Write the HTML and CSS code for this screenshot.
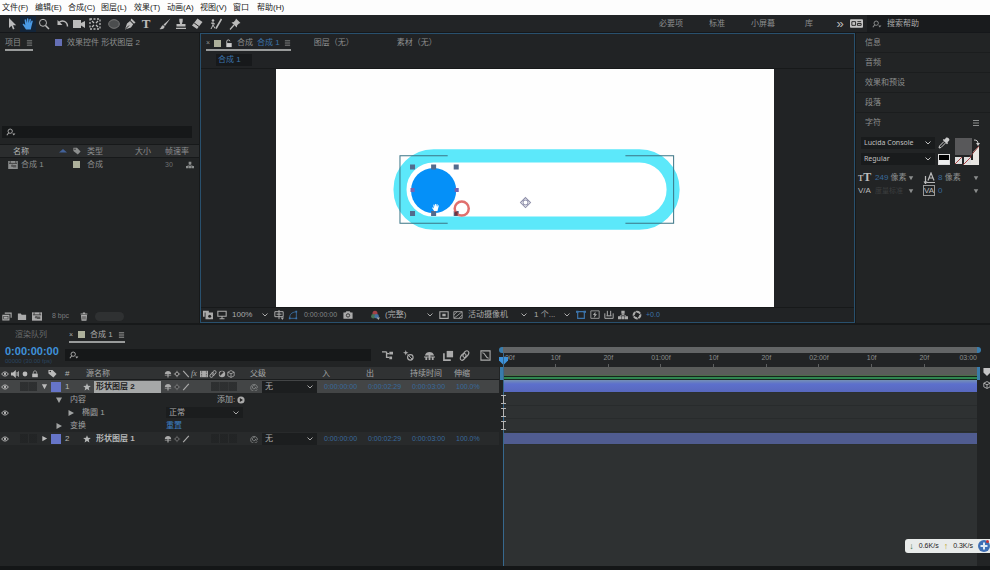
FILE: index.html
```html
<!DOCTYPE html>
<html lang="zh-CN">
<head>
  <meta charset="UTF-8">
  <meta name="viewport" content="width=device-width, initial-scale=1.0">
  <title>合成 1</title>
  <link rel="stylesheet" href="styles.css">
</head>
<body>
  <svg class="sprite" aria-hidden="true">
    <symbol id="arrow" viewBox="0 0 12 12"><path d="M3 0v10l2.500-2.200L7 11.500l1.500-.7-1.500-3.500h3.200z" fill="currentColor"/></symbol>
    <symbol id="hand" viewBox="0 0 12 12"><path d="M4 11.500 .8 6.800c-.5-1 .7-1.500 1.300-.7l1.200 1.200L2.600 2c0-1 1.200-1 1.400 0l.7 3L4.900.9c.1-1 1.400-1 1.500 0l.2 4L7.500 1.300c.3-.9 1.500-.6 1.400.3l-.5 3.700 1-2.300c.5-.8 1.600-.3 1.300.5L9.300 9l-.5 2.500z" fill="currentColor"/></symbol>
    <symbol id="search" viewBox="0 0 12 12"><circle cx="5" cy="4.800" r="3.500" fill="none" stroke="currentColor"/><path d="M7.500 7.500 11 11" stroke="currentColor" stroke-width="1.500"/></symbol>
    <symbol id="find" viewBox="0 0 12 10"><circle cx="5" cy="4" r="2.700" fill="none" stroke="currentColor" stroke-width="1.200"/><path d="M3.200 6 .8 9" stroke="currentColor" stroke-width="1.300"/><path d="M7.500 7h4L9.500 9.300z" fill="currentColor"/></symbol>
    <symbol id="rotate" viewBox="0 0 12 12"><path d="M2 4.500C5 1.500 10.500 3 10.500 8.500" fill="none" stroke="currentColor" stroke-width="1.400"/><path d="M.5 2v5h5z" fill="currentColor"/></symbol>
    <symbol id="camera" viewBox="0 0 12 12"><path d="M0 2h8V5L12 3v7L8 7.500V10H0z" fill="currentColor"/></symbol>
    <symbol id="anchor" viewBox="0 0 12 12"><rect x="1" y="1" width="10" height="10" fill="none" stroke="currentColor" stroke-width="1.300" stroke-dasharray="2 1.500"/><path d="m3 3 2 2M9 3 7 5M3 9l2-2M9 9 7 7" stroke="currentColor" stroke-width="1.300"/></symbol>
    <symbol id="ellipse" viewBox="0 0 12 12"><ellipse cx="6" cy="6" rx="5.300" ry="4.300" fill="#4b4d4e" stroke="currentColor"/></symbol>
    <symbol id="pen" viewBox="0 0 12 12"><path d="m7.500.5 4 4-1.500 1.200-3.500-3.500zM6 3 9.200 6.200 7 9.500 1 11.500 3 5.500z" fill="currentColor"/><path d="m1.500 11 3.500-3.500" stroke="#222"/></symbol>
    <symbol id="brush" viewBox="0 0 12 12"><path d="M11.500.5 6 8 4.500 6.500zM4 7l1.700 1.700C4.800 11 2.500 11.500.5 11c1.500-.6 1.500-3 3.500-4z" fill="currentColor"/></symbol>
    <symbol id="stamp" viewBox="0 0 12 12"><path d="M4.300.8h3.400v2.400L6.900 6H10.500v2.500h-9V6h3.600L4.300 3.200zM1 9.800h10V11H1z" fill="currentColor"/></symbol>
    <symbol id="eraser" viewBox="0 0 12 12"><path d="M6.500.5 11.500 4 6 11 1 7.500z" fill="currentColor"/><path d="M3.200 5 8 8.500" stroke="#222"/></symbol>
    <symbol id="roto" viewBox="0 0 12 12"><circle cx="3" cy="2.500" r="1.300" fill="currentColor"/><path d="M3 4v3L1 11M3 7l2 3.500M1 5l4 1" stroke="currentColor" fill="none"/><path d="M11.500 1 8 7 6 10.500" stroke="currentColor" stroke-width="1.600"/></symbol>
    <symbol id="pin" viewBox="0 0 12 12"><path d="m7 .5 4.500 4.500-1.500.5-1.800 1.800-.4 2.300L2.500 4.500l2.300-.6L6.500 2z" fill="currentColor"/><path d="m5 7-4 4.500" stroke="currentColor" stroke-width="1.200"/></symbol>
    <symbol id="menu" viewBox="0 0 8 8"><path d="M1 1.500h6M1 4h6M1 6.500h6" stroke="currentColor"/></symbol>
    <symbol id="chevron" viewBox="0 0 8 8"><path d="m1.500 2.500 2.500 2.500 2.500-2.500" fill="none" stroke="currentColor"/></symbol>
    <symbol id="down" viewBox="0 0 8 8"><path d="M1 1.500h6L4 7z" fill="currentColor"/></symbol>
    <symbol id="right" viewBox="0 0 8 8"><path d="M1.500 1v6L7 4z" fill="currentColor"/></symbol>
    <symbol id="sort" viewBox="0 0 8 8"><path d="M0 5.500h8L4 2z" fill="currentColor"/></symbol>
    <symbol id="unlock" viewBox="0 0 8 10"><path d="M1 4.500h6V9H1z" fill="currentColor"/><path d="M1.500 4.500V2.500C1.500.5 5 .5 5 2.500" fill="none" stroke="currentColor"/></symbol>
    <symbol id="lock" viewBox="0 0 8 10"><path d="M.5 4.500h7V9h-7z" fill="currentColor"/><path d="M2 4.500V3c0-2.500 4-2.500 4 0v1.500" fill="none" stroke="currentColor"/></symbol>
    <symbol id="tag" viewBox="0 0 10 10"><path d="M.5 1h4.500l4.500 4.500-3.500 4L.5 5z" fill="currentColor"/><circle cx="2.500" cy="2.800" r=".8" fill="#222"/></symbol>
    <symbol id="comp" viewBox="0 0 12 10"><rect width="12" height="10" fill="currentColor"/><path d="M1 3h10M2.500 0v3M9.500 0v3" stroke="#333"/><circle cx="5" cy="6" r="1.500" fill="#555"/><path d="M6 5h4v3H6z" fill="#555"/></symbol>
    <symbol id="flow" viewBox="0 0 12 12"><path d="M4 1h4v3.500H4zM0 7.500h3.700V11H0zM4.200 7.500h3.600V11H4.200zM8.300 7.500H12V11H8.300z" fill="currentColor"/><path d="M6 4v4M2 7.500 6 5l4 2.500" stroke="currentColor" fill="none"/></symbol>
    <symbol id="footage" viewBox="0 0 12 12"><path d="M.5 4.500h8v6h-8zM3 1.500h8.500v6" fill="none" stroke="currentColor" stroke-width="1.500"/><path d="M2 6h5v3H2z" fill="currentColor"/></symbol>
    <symbol id="folder" viewBox="0 0 12 12"><path d="M.5 2h4l1 1.500h6v7H.5z" fill="currentColor"/></symbol>
    <symbol id="trash" viewBox="0 0 12 12"><path d="M2 4h8l-.7 7.500H2.700zM1.500 2h9v1.300h-9zM4.500.7h3V2h-3z" fill="currentColor"/><path d="M4.700 5.500V10M7.300 5.500V10" stroke="#222"/></symbol>
    <symbol id="layers" viewBox="0 0 12 12"><path d="M0 1h7v2H2v5H0zM3 3h9v8H3z" fill="currentColor"/><circle cx="8" cy="7.500" r="1.800" fill="#222"/></symbol>
    <symbol id="monitor" viewBox="0 0 12 12"><path d="M1 1.500h10v6H1zM3 10.500h6M6 7.500v3" fill="none" stroke="currentColor" stroke-width="1.300"/></symbol>
    <symbol id="grid" viewBox="0 0 12 12"><path d="M1 2h10v6H1zM6 0v11M3 5h6" fill="none" stroke="currentColor" stroke-width="1.200"/><path d="M8 9h4l-2 3z" fill="currentColor"/></symbol>
    <symbol id="mask" viewBox="0 0 12 12"><path d="M2 10C2 5 4 3 10 2v8z" fill="none" stroke="currentColor"/><path d="M1 9h2v2H1zM9 1h2v2H9zM9 9h2v2H9z" fill="currentColor"/></symbol>
    <symbol id="photo" viewBox="0 0 12 12"><path d="M.5 3H3l1-1.500h4L9 3h2.500v7.500H.5z" fill="currentColor"/><circle cx="6" cy="6.500" r="2" fill="none" stroke="#222"/></symbol>
    <symbol id="rgb" viewBox="0 0 12 12"><circle cx="6" cy="4" r="3" fill="#a34248"/><circle cx="4" cy="7.500" r="2.700" fill="#487358"/><circle cx="8" cy="7.500" r="2.700" fill="#4670a0"/><path d="M8 9h4l-2 3z" fill="#aaa"/></symbol>
    <symbol id="region" viewBox="0 0 12 12"><path d="M1 2h10v8H1z" fill="none" stroke="currentColor" stroke-width="1.300"/><path d="M4 4.500h4v3H4z" fill="currentColor"/></symbol>
    <symbol id="checker" viewBox="0 0 12 12"><path d="M1 2h10v8H1zM1 10l10-8M1 6l4-4M7 10l4-4" fill="none" stroke="currentColor"/></symbol>
    <symbol id="pixel" viewBox="0 0 12 12"><path d="M0 2h12M2 2v8h8V2" fill="none" stroke="currentColor" stroke-width="1.400"/><path d="M0 .8h3v2.400H0zM9 .8h3v2.400H9z" fill="currentColor"/></symbol>
    <symbol id="fast" viewBox="0 0 12 12"><path d="M1 1h10v9H1z" fill="none" stroke="currentColor"/><path d="M6.500 2 3.500 6h2L4.500 9.500l4-4.500h-2z" fill="currentColor"/></symbol>
    <symbol id="line" viewBox="0 0 12 12"><path d="M1 4v6h10V4M4 1v6M8 1v6M3 7h6" fill="none" stroke="currentColor" stroke-width="1.200"/></symbol>
    <symbol id="aperture" viewBox="0 0 12 12"><circle cx="6" cy="6" r="4" fill="none" stroke="currentColor" stroke-width="2.500"/><path d="m3 1 3 3M11 4 8 6M8 11 6 8M1 8l3-2" stroke="#222"/></symbol>
    <symbol id="eye" viewBox="0 0 12 10"><path d="M1 5c2.500-4 7.500-4 10 0-2.500 4-7.500 4-10 0z" fill="none" stroke="currentColor" stroke-width="1.400"/><circle cx="6" cy="5" r="1.700" fill="currentColor"/></symbol>
    <symbol id="audio" viewBox="0 0 10 10"><path d="M0 3h2.500L6 0v10L2.500 7H0zM7 2.500h1.300v5H7zM9 1.500h1v7H9z" fill="currentColor"/></symbol>
    <symbol id="dot" viewBox="0 0 10 10"><circle cx="5" cy="5" r="3" fill="currentColor"/></symbol>
    <symbol id="star" viewBox="0 0 10 10"><path d="m5 .3 1.300 3.200 3.500.2L7.100 6l.9 3.500-3-2-3 2L2.900 6 .2 3.700l3.500-.2z" fill="currentColor"/></symbol>
    <symbol id="shy" viewBox="0 0 10 10"><path d="M1 5c0-5 8-5 8 0zM1 6h8v1H1zM4.300 5h1.400v4.500H4.300z" fill="currentColor"/></symbol>
    <symbol id="sun" viewBox="0 0 10 10"><path d="M5 1v8M1 5h8" stroke="currentColor"/><circle cx="5" cy="5" r="2.200" fill="#333" stroke="currentColor"/></symbol>
    <symbol id="slash" viewBox="0 0 10 10"><path d="m1.500 9 7-8" stroke="currentColor" stroke-width="1.400"/></symbol>
    <symbol id="backslash" viewBox="0 0 10 10"><path d="m1.500 1 7 8" stroke="currentColor" stroke-width="1.400"/></symbol>
    <symbol id="film" viewBox="0 0 10 10"><path d="M0 1h10v8H0z" fill="currentColor"/><path d="M2 1v8M8 1v8" stroke="#333" stroke-dasharray="1 1"/></symbol>
    <symbol id="blur" viewBox="0 0 12 12"><ellipse cx="4.500" cy="7.500" rx="2.500" ry="4" transform="rotate(35 4.500 7.500)" fill="none" stroke="currentColor" stroke-width="1.300"/><ellipse cx="7.500" cy="4.500" rx="2.500" ry="4" transform="rotate(35 7.500 4.500)" fill="none" stroke="currentColor" stroke-width="1.300"/></symbol>
    <symbol id="adjust" viewBox="0 0 10 10"><circle cx="5" cy="5" r="4" fill="currentColor"/><path d="M2.800 7.200A3 3 0 0 1 7.200 2.800z" fill="#333"/></symbol>
    <symbol id="cube" viewBox="0 0 10 10"><path d="m5 .7 4 2v4.600L5 9.300l-4-2V2.700zM1 2.700l4 2 4-2M5 4.700v4.600" fill="none" stroke="currentColor"/></symbol>
    <symbol id="spiral" viewBox="0 0 10 10"><path d="M9 8A4.300 4.300 0 1 1 9.300 5c0 2-2.300 2-2.300.3A2 2 0 1 1 6 3.500" fill="none" stroke="currentColor"/></symbol>
    <symbol id="add" viewBox="0 0 10 10"><circle cx="5" cy="5" r="4.500" fill="currentColor"/><path d="M3.500 2.500 7.500 5l-4 2.500z" fill="#222"/></symbol>
    <symbol id="tree" viewBox="0 0 12 12"><path d="M0 2h5M5 2v6h3M5 4h3" fill="none" stroke="currentColor" stroke-width="1.500"/><path d="M8 2h4v3H8zM8 7h3v3H8z" fill="currentColor"/></symbol>
    <symbol id="draft" viewBox="0 0 12 12"><path d="m3 0 .8 2.200L6 3l-2.200.8L3 6l-.8-2.200L0 3l2.200-.8z" fill="currentColor"/><circle cx="8" cy="8" r="3" fill="none" stroke="currentColor" stroke-width="1.300"/><path d="m5 5 5 5" stroke="currentColor"/></symbol>
    <symbol id="hide" viewBox="0 0 12 12"><path d="M1 6c1-5 9-5 10 0zM0 7h12v1.300H0zM5 6h2v5H5zM1.500 7.500h2V11h-2zM8.500 7.500h2V11h-2z" fill="currentColor"/></symbol>
    <symbol id="blend" viewBox="0 0 12 12"><path d="M4 1h7v7H4z" fill="currentColor"/><path d="M1 3.500V11h7.500" fill="none" stroke="currentColor" stroke-width="1.800"/></symbol>
    <symbol id="graph" viewBox="0 0 12 12"><path d="M1 1h10v10H1zM2.500 3c4 0 3 6 7 6" fill="none" stroke="currentColor" stroke-width="1.200"/></symbol>
    <symbol id="ibeam" viewBox="0 0 5 9"><path d="M0 .5h5M2.500.5v8M0 8.500h5" stroke="currentColor" fill="none"/></symbol>
    <symbol id="dropper" viewBox="0 0 12 12"><path d="M8 .8c1.500-1.500 4.500 1.500 3 3L9.500 5.300l.5 1L9 7.200 4.800 3l.9-1 1 .5z" fill="currentColor"/><path d="m6 4.500-4.500 4.500L1 11l2-.5L7.500 6" fill="none" stroke="currentColor"/></symbol>
    <symbol id="cc" viewBox="0 0 14 9"><rect width="14" height="9" rx="1" fill="currentColor"/><path d="M2 2.500h4v4H2zM8 2.500h4M8 4.500h4v2H8z" fill="none" stroke="#222"/></symbol>
    <symbol id="marker" viewBox="0 0 8 9"><path d="M0 0h8v5L4 9 0 5z" fill="currentColor"/></symbol>
    <symbol id="leading" viewBox="0 0 12 12"><path d="M2.500 4v7M1 9.500 2.500 11.500 4 9.500M4 10.500h8M5 8.500 8 1l3 7.500M6 6h4" fill="none" stroke="currentColor" stroke-width="1.200"/></symbol>
  </svg>

  <nav class="menubar" aria-label="主菜单">
    <button>文件(F)</button>
    <button>编辑(E)</button>
    <button>合成(C)</button>
    <button>图层(L)</button>
    <button>效果(T)</button>
    <button>动画(A)</button>
    <button>视图(V)</button>
    <button class="short">窗口</button>
    <button>帮助(H)</button>
  </nav>

  <header class="toolbar">
    <div class="tools">
      <div class="tool-group">
        <button class="tool" aria-label="选取"><svg><use href="#arrow"/></svg></button>
        <button class="tool active" aria-label="手形"><svg><use href="#hand"/></svg></button>
        <button class="tool" aria-label="缩放"><svg><use href="#search"/></svg></button>
      </div>
      <div class="tool-group">
        <button class="tool" aria-label="旋转"><svg><use href="#rotate"/></svg></button>
        <button class="tool" aria-label="摄像机"><svg><use href="#camera"/></svg></button>
        <button class="tool" aria-label="锚点"><svg><use href="#anchor"/></svg></button>
      </div>
      <div class="tool-group">
        <button class="tool dim" aria-label="椭圆"><svg><use href="#ellipse"/></svg></button>
        <button class="tool" aria-label="钢笔"><svg><use href="#pen"/></svg></button>
        <button class="tool type" aria-label="文字">T</button>
      </div>
      <div class="tool-group">
        <button class="tool" aria-label="画笔"><svg><use href="#brush"/></svg></button>
        <button class="tool" aria-label="仿制图章"><svg><use href="#stamp"/></svg></button>
        <button class="tool" aria-label="橡皮擦"><svg><use href="#eraser"/></svg></button>
      </div>
      <button class="tool" aria-label="Roto 笔刷"><svg><use href="#roto"/></svg></button>
      <button class="tool" aria-label="操控点"><svg><use href="#pin"/></svg></button>
    </div>
    <div class="spaces">
      <button>必要项</button>
      <button>标准</button>
      <button>小屏幕</button>
      <button>库</button>
    </div>
    <button class="more" aria-label="更多">»</button>
    <svg class="cc"><use href="#cc"/></svg>
    <label class="help"><svg><use href="#find"/></svg><input type="text" placeholder="搜索帮助" aria-label="搜索帮助"></label>
  </header>

  <main class="workspace">
    <section class="project">
      <div class="tabs">
        <button class="tab current">项目 <svg><use href="#menu"/></svg></button>
        <button class="tab effects"><i class="swatch violet"></i>效果控件 形状图层 2</button>
      </div>
      <label class="field project-search"><svg><use href="#find"/></svg><input type="text" aria-label="搜索项目"></label>
      <table class="items">
        <colgroup><col><col class="c-tag"><col class="c-type"><col class="c-size"><col class="c-rate"><col class="c-flow"></colgroup>
        <thead>
          <tr><th class="name">名称 <svg class="sort"><use href="#sort"/></svg></th><th><svg><use href="#tag"/></svg></th><th>类型</th><th>大小</th><th>帧速率</th><th></th></tr>
        </thead>
        <tbody>
          <tr><td class="item"><svg><use href="#comp"/></svg>合成 1</td><td><i class="swatch sand"></i></td><td>合成</td><td></td><td class="rate">30</td><td><svg><use href="#flow"/></svg></td></tr>
        </tbody>
      </table>
      <footer class="project-foot">
        <button aria-label="解释素材"><svg><use href="#footage"/></svg></button>
        <button aria-label="新建文件夹"><svg><use href="#folder"/></svg></button>
        <button aria-label="新建合成"><svg><use href="#comp"/></svg></button>
        <button class="bpc">8 bpc</button>
        <button aria-label="删除"><svg><use href="#trash"/></svg></button>
        <span class="pill"></span>
      </footer>
    </section>

    <section class="composition">
      <div class="tabs">
        <button class="tab current"><span class="close">×</span><i class="swatch sand"></i><svg class="tab-lock"><use href="#unlock"/></svg>合成 <b>合成 1</b><svg><use href="#menu"/></svg></button>
        <button class="tab layer-tab">图层（无）</button>
        <button class="tab">素材（无）</button>
      </div>
      <div class="crumbs"><button>合成 1</button></div>
      <div class="viewer">
        <svg class="canvas" viewBox="0 0 498 237" preserveAspectRatio="xMidYMid slice">
          <rect width="498" height="237" fill="#fefefe"/>
          <rect x="124.500" y="86.500" width="272" height="67" rx="33.500" fill="#fff" stroke="#5ce8fa" stroke-width="13"/>
          <circle cx="158" cy="121" r="22.500" fill="#0590f8"/>
          <path d="M172 86.500h-47.500v67H172M349 86.500h48v67h-48" fill="none" stroke="#3b7485"/>
          <path d="M134.500 95h5v5h-5zM155.500 95h5v5h-5zM178 95h5v5h-5zM134.500 141.500h5v5h-5zM155.500 141.500h5v5h-5zM178 141.500h5v5h-5z" fill="#536b8d"/>
          <path d="M135 118.500h4v4h-4zM179 118.500h4v4h-4z" fill="#7763ad"/>
          <circle cx="186" cy="139" r="7" fill="none" stroke="#e0706e" stroke-width="2.500"/>
          <path d="M179 142h3v4h-3z" fill="#70353f"/>
          <path d="m249.500 128 5 5-5 5-5-5z" fill="none" stroke="#8c8da8"/>
          <circle cx="249.500" cy="133" r="2.500" fill="#fff" stroke="#8c8da8"/>
          <svg x="156" y="134" width="11" height="12" color="#fff"><use href="#hand"/></svg>
        </svg>
      </div>
      <footer class="viewer-foot">
        <button aria-label="始终预览"><svg><use href="#layers"/></svg></button>
        <button aria-label="主查看器"><svg><use href="#monitor"/></svg></button>
        <label class="pick zoom"><select aria-label="放大率"><option>100%</option></select><svg><use href="#chevron"/></svg></label>
        <button aria-label="网格"><svg><use href="#grid"/></svg></button>
        <button class="on" aria-label="蒙版"><svg><use href="#mask"/></svg></button>
        <button class="time">0:00:00:00</button>
        <button aria-label="快照"><svg><use href="#photo"/></svg></button>
        <button class="channels" aria-label="通道"><svg><use href="#rgb"/></svg></button>
        <label class="pick quality"><select aria-label="分辨率"><option>(完整)</option></select><svg><use href="#chevron"/></svg></label>
        <button aria-label="目标区域"><svg><use href="#region"/></svg></button>
        <button aria-label="透明网格"><svg><use href="#checker"/></svg></button>
        <label class="pick view"><select aria-label="视图"><option>活动摄像机</option></select><svg><use href="#chevron"/></svg></label>
        <label class="pick count"><select aria-label="视图数"><option>1 个...</option></select><svg><use href="#chevron"/></svg></label>
        <button class="on" aria-label="像素长宽比"><svg><use href="#pixel"/></svg></button>
        <button aria-label="快速预览"><svg><use href="#fast"/></svg></button>
        <button aria-label="时间轴"><svg><use href="#line"/></svg></button>
        <button aria-label="流程图"><svg><use href="#flow"/></svg></button>
        <button aria-label="重置曝光"><svg><use href="#aperture"/></svg></button>
        <span class="exposure">+0.0</span>
      </footer>
    </section>

    <aside class="side">
      <button class="side-tab">信息</button>
      <button class="side-tab">音频</button>
      <button class="side-tab">效果和预设</button>
      <button class="side-tab">段落</button>
      <button class="side-tab open">字符 <svg><use href="#menu"/></svg></button>
      <div class="character">
        <div class="fonts">
          <label class="pick"><select aria-label="字体"><option>Lucida Console</option></select><svg><use href="#chevron"/></svg></label>
          <label class="pick"><select aria-label="样式"><option>Regular</option></select><svg><use href="#chevron"/></svg></label>
        </div>
        <div class="inks">
          <svg class="dropper"><use href="#dropper"/></svg>
          <span class="mono"></span>
        </div>
        <svg class="paint" viewBox="0 0 28 30">
          <path d="M26 9v19H10l5-5h5v-8z" fill="#e8e6e2"/>
          <path d="m10 28 16-19" stroke="#8f3a3a"/>
          <path d="M2 1h17v17H2z" fill="#58585a"/>
          <path d="M2 20h7v7H2zM11 20h7v7h-7z" fill="#ddd"/><path d="m2 27 7-7M11 27l7-7" stroke="#a44"/>
          <path d="M21 3c3 0 4 1 4 4" fill="none" stroke="#ccc"/><path d="M23 6h4l-2 3z" fill="#ccc"/>
        </svg>
      </div>
      <div class="metrics">
        <span class="glyph serif"><small>T</small>T</span><span><b>249</b> 像素</span><svg><use href="#down"/></svg>
        <svg class="leading"><use href="#leading"/></svg><span><b>8</b> 像素</span><svg><use href="#down"/></svg>
        <span class="glyph">V/A</span><span class="off">度量标准</span><svg><use href="#down"/></svg>
        <span class="glyph"><span class="boxed">VA</span></span><span><b>0</b></span><svg><use href="#down"/></svg>
      </div>
    </aside>
  </main>

  <section class="timeline">
    <div class="tabs">
      <button class="tab queue">渲染队列</button>
      <button class="tab current"><span class="close">×</span><i class="swatch sand"></i>合成 1 <svg><use href="#menu"/></svg></button>
    </div>
    <div class="panes">
      <div class="layers">
        <div class="controls">
          <div class="clock"><strong>0:00:00:00</strong><small>00000 (30.00 fps)</small></div>
          <label class="field"><svg><use href="#find"/></svg><input type="text" aria-label="搜索图层"></label>
          <div class="modes">
            <button aria-label="微型流程图"><svg><use href="#tree"/></svg></button>
            <button aria-label="草图 3D"><svg><use href="#draft"/></svg></button>
            <button aria-label="隐藏图层"><svg><use href="#hide"/></svg></button>
            <button class="tight" aria-label="帧混合"><svg><use href="#blend"/></svg></button>
            <button class="tight" aria-label="运动模糊"><svg><use href="#blur"/></svg></button>
            <button class="last" aria-label="图表编辑器"><svg><use href="#graph"/></svg></button>
          </div>
        </div>
        <div class="row head">
          <div class="av"><svg><use href="#eye"/></svg><svg><use href="#audio"/></svg><svg><use href="#dot"/></svg><svg><use href="#lock"/></svg></div>
          <div class="label"><svg class="tag"><use href="#tag"/></svg></div>
          <div class="num">#</div>
          <div>源名称</div>
          <div class="switches"><svg><use href="#shy"/></svg><svg><use href="#sun"/></svg><svg><use href="#backslash"/></svg><em>fx</em><svg><use href="#film"/></svg><svg><use href="#blur"/></svg><svg><use href="#adjust"/></svg><svg><use href="#cube"/></svg></div>
          <div class="parent">父级</div>
          <div>入</div><div>出</div><div>持续时间</div><div>伸缩</div>
        </div>
        <div class="row layer selected">
          <div class="av"><svg><use href="#eye"/></svg><i class="slots"></i></div>
          <div class="label"><svg><use href="#down"/></svg><i class="swatch"></i></div>
          <div class="num">1</div>
          <div class="name"><svg><use href="#star"/></svg><span>形状图层 2</span></div>
          <div class="switches"><svg><use href="#shy"/></svg><svg class="faint"><use href="#sun"/></svg><svg><use href="#slash"/></svg><i class="slots wide"></i></div>
          <div class="parent"><svg><use href="#spiral"/></svg><label class="pick"><select aria-label="父级 1"><option>无</option></select><svg><use href="#chevron"/></svg></label></div>
          <div class="t">0:00:00:00</div><div class="t">0:00:02:29</div><div class="t">0:00:03:00</div><div class="t">100.0%</div>
        </div>
        <div class="row">
          <div class="av"></div>
          <div class="prop"><svg><use href="#down"/></svg>内容</div>
          <div class="add">添加: <svg><use href="#add"/></svg></div>
        </div>
        <div class="row">
          <div class="av"><svg><use href="#eye"/></svg></div>
          <div class="prop deep"><svg><use href="#right"/></svg>椭圆 1</div>
          <div class="mode"><label class="pick"><select aria-label="混合模式"><option>正常</option></select><svg><use href="#chevron"/></svg></label></div>
        </div>
        <div class="row">
          <div class="av"></div>
          <div class="prop"><svg><use href="#right"/></svg>变换</div>
          <div class="mode"><button class="reset">重置</button></div>
        </div>
        <div class="row layer second">
          <div class="av"><svg><use href="#eye"/></svg><i class="slots"></i></div>
          <div class="label"><svg><use href="#right"/></svg><i class="swatch"></i></div>
          <div class="num">2</div>
          <div class="name"><svg><use href="#star"/></svg><span>形状图层 1</span></div>
          <div class="switches"><svg><use href="#shy"/></svg><svg class="faint"><use href="#sun"/></svg><svg><use href="#slash"/></svg><i class="slots wide"></i></div>
          <div class="parent"><svg><use href="#spiral"/></svg><label class="pick"><select aria-label="父级 2"><option>无</option></select><svg><use href="#chevron"/></svg></label></div>
          <div class="t">0:00:00:00</div><div class="t">0:00:02:29</div><div class="t">0:00:03:00</div><div class="t">100.0%</div>
        </div>
      </div>

      <div class="tracks">
        <div class="navigator"></div>
        <div class="ruler">
          <span class="first">:00f</span><span>10f</span><span>20f</span><span>01:00f</span><span>10f</span><span>20f</span><span>02:00f</span><span>10f</span><span>20f</span><span class="last">03:00</span>
        </div>
        <div class="workarea"></div>
        <div class="bar bright"></div>
        <div class="lane"><svg><use href="#ibeam"/></svg></div>
        <div class="lane"><svg><use href="#ibeam"/></svg></div>
        <div class="lane"><svg><use href="#ibeam"/></svg></div>
        <div class="bar"></div>
        <div class="rest"></div>
        <svg class="playhead" viewBox="0 0 10 10"><path d="M0 1h10v4L5 10 0 5z" fill="#3d93dc"/></svg>
      </div>
      <div class="gutter">
        <svg><use href="#marker"/></svg>
        <svg><use href="#cube"/></svg>
      </div>
    </div>
  </section>

  <div class="netspeed">
    <span class="download">↓</span><span>0.6K/s</span><span class="upload">↑</span><span>0.3K/s</span>
    <svg viewBox="0 0 12 12"><circle cx="6" cy="6" r="6" fill="#3f6fb5"/><path d="M6 2.500v7M2.500 6h7" stroke="#dfe9f5" stroke-width="2"/><circle cx="9.500" cy="1.500" r="1.500" fill="#c33"/></svg>
  </div>
</body>
</html>
```

FILE: styles.css
```css
* {
  box-sizing: border-box;
}
body {
  margin: 0;
  min-height: 100vh;
  display: grid;
  grid-template-rows: 15px 18px 1fr 245px;
  background-color: #17191a;
  color: #8c8e8e;
  font: 8px/12px "Liberation Sans", "Noto Sans CJK SC", sans-serif;
  overflow: hidden;
}
button, input, select {
  font: inherit;
  color: inherit;
  background: none;
  border: none;
  padding: 0;
  margin: 0;
  min-width: 0;
}
button {
  white-space: nowrap;
  cursor: pointer;
}
select {
  appearance: none;
  flex: 1;
}
svg {
  display: block;
  flex: none;
  width: 8px;
  height: 8px;
}
.sprite {
  position: absolute;
  width: 0;
  height: 0;
}
.swatch {
  display: block;
  width: 7px;
  height: 7px;
  background-color: #6675c8;
}
.swatch.sand {
  background-color: #adb09b;
}
.swatch.violet {
  background-color: #656fb5;
}

/* menu and tools */
.menubar {
  display: flex;
  background-color: #fdfdfd;
  color: #222;
  padding-left: 2px;
}
.menubar button {
  width: 33px;
  text-align: left;
}
.menubar .short {
  width: 24px;
}
.toolbar {
  display: flex;
  align-items: center;
  background-color: #222426;
  border-bottom: 1px solid #15171a;
}
.tools {
  display: flex;
  gap: 3px;
  padding-left: 4px;
  margin-right: auto;
  color: #bbb;
}
.tool-group {
  display: flex;
}
.tool {
  width: 16px;
  height: 16px;
  display: flex;
  align-items: center;
  justify-content: center;
}
.tool svg {
  width: 12px;
  height: 12px;
}
.tool.active {
  color: #4a9ae6;
  background-color: #13253a;
}
.tool.dim {
  color: #777;
}
.tool.type {
  font: bold 13px "Liberation Serif", serif;
}
.spaces {
  display: flex;
}
.spaces button {
  width: 46px;
}
.more {
  width: 16px;
  font-size: 13px;
  color: #bbb;
}
.cc {
  width: 13px;
  height: 9px;
  margin: 0 4px 0 2px;
  color: #c5c5c5;
}
.help {
  display: flex;
  align-items: center;
  gap: 5px;
  width: 123px;
  height: 17px;
  padding-left: 5px;
  background-color: #191b1d;
}
.help svg {
  width: 10px;
}
.help input {
  width: 90px;
}
.help input::placeholder {
  color: #aaa;
}

/* top panels */
.workspace {
  display: grid;
  grid-template-columns: 199px 1fr 134px;
  gap: 1px;
  min-height: 0;
  padding-bottom: 2px;
}
.project, .side {
  background-color: #222425;
}
.tabs {
  display: flex;
  align-items: stretch;
  height: 18px;
}
.tab {
  display: flex;
  align-items: center;
  gap: 5px;
  padding-top: 3px;
  border-bottom: 2px solid transparent;
}
.tab.current {
  border-bottom-color: #999b9b;
}
.tab svg {
  width: 7px;
}
.project {
  display: flex;
  flex-direction: column;
}
.project .tabs {
  gap: 22px;
  padding-left: 5px;
}
.field {
  display: flex;
  align-items: center;
  height: 12px;
  background-color: #161819;
  color: #aaa;
}
.field svg {
  width: 10px;
  margin: 0 4px;
}
.field input {
  flex: 1;
}
.project-search {
  margin: 75px 7px 6px 2px;
}
.items {
  width: 100%;
  table-layout: fixed;
  border-collapse: collapse;
  text-align: left;
  white-space: nowrap;
}
.items th, .items td {
  padding: 0;
  height: 12px;
  font-weight: normal;
  line-height: 11px;
}
.items td {
  height: 14px;
}
.items thead {
  background-color: #2b2d2e;
  border: solid #17191a;
  border-width: 1px 0;
}
.c-tag { width: 14px; }
.c-type { width: 48px; }
.c-size { width: 30px; }
.c-rate { width: 21px; }
.c-flow { width: 13px; }
.items .name {
  padding-left: 13px;
}
.items .sort {
  display: inline-block;
  margin-left: 30px;
  vertical-align: middle;
  color: #43629a;
}
.items .item svg {
  display: inline-block;
  width: 10px;
  margin: 0 3px 0 8px;
  vertical-align: middle;
}
.items .rate {
  font-size: 7px;
  color: #6d6f70;
}
.project-foot {
  display: flex;
  align-items: center;
  gap: 1px;
  height: 14px;
  margin-top: auto;
  color: #aaa;
}
.project-foot button {
  width: 14px;
  display: flex;
  justify-content: center;
}
.project-foot svg {
  width: 10px;
  height: 9px;
}
.project-foot .bpc {
  width: 31px;
  font-size: 7px;
  color: #7b7d7d;
}
.pill {
  width: 29px;
  height: 9px;
  margin-left: 3px;
  border-radius: 5px;
  background-color: #2f3132;
}

/* composition viewer */
.composition {
  display: flex;
  flex-direction: column;
  min-height: 0;
  border: 1px solid #29506d;
  background-color: #212325;
}
.composition .tabs {
  height: 17px;
  flex: none;
  padding-left: 5px;
}
.composition .tab b {
  color: #3c74ab;
  font-weight: normal;
}
.composition .tab {
  gap: 4px;
}
.composition .layer-tab {
  margin: 0 43px 0 23px;
}
.close {
  font-size: 7px;
}
.tab .tab-lock {
  width: 8px;
  height: 9px;
  color: #ccc;
}
.crumbs {
  flex: none;
  height: 18px;
  padding: 3px 15px;
  border-bottom: 1px solid #17191a;
}
.crumbs button {
  width: 36px;
  height: 12px;
  padding-left: 2px;
  text-align: left;
  color: #3c74ab;
  background-color: #17191b;
}
.viewer {
  flex: 1;
  min-height: 0;
  display: flex;
  padding: 0 80px 0 75px;
}
.canvas {
  flex: 1;
  width: auto;
  height: auto;
  min-width: 0;
}
.viewer-foot {
  flex: none;
  display: flex;
  align-items: center;
  height: 15px;
  color: #aaa;
  border-top: 1px solid #17191a;
}
.viewer-foot button {
  width: 14px;
  flex: none;
  display: flex;
  justify-content: center;
}
.viewer-foot button svg {
  width: 10px;
  height: 10px;
}
.viewer-foot .on {
  color: #3c74ab;
}
.viewer-foot .time {
  width: 41px;
  font-size: 7px;
  color: #858787;
}
.viewer-foot .channels {
  margin-left: 13px;
}
.pick {
  display: flex;
  align-items: center;
  padding: 0 3px;
}
.zoom, .count {
  width: 43px;
}
.quality {
  width: 55px;
}
.view {
  width: 66px;
}
.exposure {
  padding-left: 2px;
  font-size: 7px;
  color: #3c74ab;
}

/* right column */
.side-tab {
  display: flex;
  align-items: center;
  justify-content: space-between;
  width: 100%;
  height: 20px;
  padding: 0 10px 0 9px;
  border-bottom: 1px solid #1b1d1e;
}
.side-tab.open {
  border-bottom: none;
}
.character {
  display: flex;
  gap: 3px;
  padding: 4px 0 0 5px;
}
.fonts {
  display: grid;
  gap: 4px;
  width: 74px;
  height: 28px;
  color: #c0c0c0;
  font-family: "Noto Sans", sans-serif;
  font-size: 7px;
}
.fonts .pick {
  height: 12px;
  background-color: #191b1c;
}
.inks .dropper {
  width: 12px;
  height: 12px;
  color: #ccc;
}
.mono {
  display: block;
  width: 12px;
  height: 11px;
  margin-top: 5px;
  border: 1px solid #ddd;
  background: linear-gradient(#000 50%, #eee 50%);
}
.paint {
  width: 28px;
  height: 30px;
}
.metrics {
  display: grid;
  grid-template-columns: 17px 33px 15px 15px 35px 8px;
  grid-auto-rows: 13px;
  align-items: center;
  padding: 4px 0 0 2px;
  white-space: nowrap;
}
.metrics svg {
  width: 6px;
  height: 6px;
}
.metrics .leading {
  width: 12px;
  height: 12px;
  color: #bbb;
}
.metrics b, .t {
  font-weight: normal;
  color: #38699c;
}
.metrics .off {
  color: #3c3e3f;
  font-size: 7px;
}
.glyph {
  color: #bbb;
}
.glyph.serif {
  font: bold 12px/12px "Liberation Serif", serif;
}
.glyph small {
  font-size: 8px;
}
.boxed {
  border: 1px solid #999;
}

/* timeline */
.timeline {
  display: flex;
  flex-direction: column;
  background-color: #222425;
  border-bottom: 4px solid #141617;
}
.timeline .tabs {
  flex: none;
  gap: 22px;
  padding-left: 15px;
}
.timeline .queue {
  color: #6a6c6d;
}
.timeline .current {
  color: #aaa;
}
.panes {
  flex: 1;
  display: grid;
  grid-template-columns: 499px 1fr 13px;
}
.controls {
  display: flex;
  align-items: center;
  height: 24px;
}
.controls .field {
  flex: 1;
}
.clock {
  width: 65px;
  padding-left: 5px;
}
.clock strong {
  display: block;
  font-size: 11px;
  line-height: 13px;
  color: #3f92da;
}
.clock small {
  display: block;
  font-size: 6px;
  line-height: 7px;
  color: #2b4560;
}
.modes {
  display: flex;
  width: 128px;
  padding-left: 6px;
  color: #aaa;
}
.modes button {
  width: 21px;
  display: flex;
  justify-content: center;
}
.modes .tight {
  width: 16px;
}
.modes .last {
  width: 27px;
}
.modes svg {
  width: 11px;
  height: 11px;
}
.row {
  display: grid;
  grid-template-columns: 41px 22px 20px 81px 84px 74px 44px 44px 44px 1fr;
  align-items: center;
  height: 13px;
  line-height: 13px;
  white-space: nowrap;
}
.row > div {
  min-width: 0;
}
.row.head {
  background-color: #303233;
  border-bottom: 1px solid #1a1c1d;
  color: #a5a7a7;
}
.row.selected {
  background-color: #434546;
}
.row.second {
  background-color: #282a2b;
}
.av, .label, .switches, .parent, .name, .prop, .add, .mode {
  display: flex;
  align-items: center;
}
.av svg {
  margin-left: 1px;
  margin-right: 1px;
  color: #bbb;
}
.slots {
  width: 17px;
  height: 9px;
  margin-left: 10px;
  background: repeating-linear-gradient(90deg, #1f2122 0 8px, #2c2e2f 8px 9px);
  opacity: 0.6;
}
.slots.wide {
  width: 26px;
  margin-left: 20px;
}
.label {
  gap: 3px;
}
.label svg {
  width: 7px;
  height: 7px;
  color: #bbb;
}
.label .swatch {
  width: 10px;
  height: 10px;
}
.label .tag {
  width: 9px;
  height: 9px;
  margin-left: 7px;
}
.num {
  padding-left: 2px;
  color: #b5b7b7;
}
.head div:nth-child(4) {
  padding-left: 3px;
}
.name {
  color: #b5b7b7;
}
.name span {
  flex: 1;
  margin: 0 3px;
  padding-left: 2px;
  line-height: 12px;
  font-weight: bold;
}
.selected .name span {
  background-color: #a6a8a8;
  color: #222;
}
.switches {
  color: #aaa;
}
.switches svg, .switches em {
  width: 8px;
  margin-right: 1px;
}
.switches em {
  font-family: "Liberation Serif", serif;
}
.faint {
  opacity: 0.5;
}
.parent {
  padding-left: 2px;
}
.parent .pick {
  width: 55px;
  margin-left: 4px;
  height: 12px;
  background-color: #1c1e1f;
  color: #aaa;
}
.t {
  padding-left: 2px;
  font-size: 7px;
}
.prop {
  grid-column: 2 / 5;
  gap: 7px;
  padding-left: 14px;
  color: #a0a2a2;
}
.prop svg, .add svg {
  width: 8px;
}
.prop.deep {
  padding-left: 26px;
}
.add {
  grid-column: 5 / 6;
  gap: 2px;
  padding-left: 53px;
  color: #aaa;
}
.mode {
  grid-column: 5 / 7;
  padding-left: 2px;
}
.mode .pick {
  width: 77px;
  height: 11px;
  background-color: #1b1d1e;
  color: #aaa;
}
.reset {
  color: #3c7fc0;
}

.tracks {
  position: relative;
  display: flex;
  flex-direction: column;
  padding-left: 4px;
}
.tracks::before {
  content: "";
  position: absolute;
  left: 4px;
  top: 10px;
  bottom: 0;
  width: 1px;
  background-color: #36688e;
  z-index: 1;
}
.navigator {
  height: 6px;
  margin: 4px -4px 0;
  border: solid #397cab;
  border-width: 0 4px;
  border-radius: 3px;
  background-color: #636566;
}
.ruler {
  display: grid;
  grid-template-columns: 1fr repeat(8, 2fr) 1fr;
  height: 14px;
  font-size: 7px;
  line-height: 10px;
  text-align: center;
}
.ruler span {
  min-width: 0;
  background: linear-gradient(#5d5f5f, #5d5f5f) bottom / 1px 3px no-repeat;
}
.ruler .first {
  text-align: left;
  background: none;
}
.ruler .last {
  text-align: right;
  background: none;
}
.workarea {
  flex: none;
  height: 13px;
  margin: 0 -3px;
  border: solid #397cab;
  border-width: 0 3px;
  background: linear-gradient(#5a5c5a 0 8px, #4b6d49 8px 9px, #18251d 9px 10px, #2f8750 10px 12px, #17291f 12px);
}
.bar {
  flex: none;
  height: 13px;
  border-top: 1px solid #2b3030;
  border-bottom: 1px solid #2b3030;
  background-color: #505c90;
}
.bar.bright {
  border-top: none;
  background: linear-gradient(#7590b5, #5d70cc 4px, #5868be);
}
.lane {
  flex: none;
  height: 13px;
  padding-top: 2px;
  background-color: #2e3132;
  border-bottom: 1px solid #282b2c;
}
.lane svg {
  position: relative;
  z-index: 2;
  width: 5px;
  height: 9px;
  margin-left: -2px;
  color: #b5b5b5;
}
.rest {
  flex: 1;
  background-color: #2e3132;
}
.playhead {
  position: absolute;
  left: 0;
  top: 13px;
  width: 9px;
  height: 9px;
}
.gutter {
  padding: 25px 0 0 6px;
  color: #c5c5c5;
}
.gutter svg {
  margin-bottom: 5px;
}

/* floating network monitor */
.netspeed {
  position: absolute;
  right: 0;
  bottom: 17px;
  display: flex;
  align-items: center;
  gap: 5px;
  height: 14px;
  padding-left: 4px;
  border-radius: 3px 0 0 3px;
  background-color: #e8ebea;
  color: #222;
  font-size: 7px;
}
.netspeed svg {
  width: 12px;
  height: 12px;
}
.download, .upload {
  font-size: 9px;
  font-weight: bold;
}
.download {
  color: #357048;
}
.upload {
  color: #bda32e;
}
```
